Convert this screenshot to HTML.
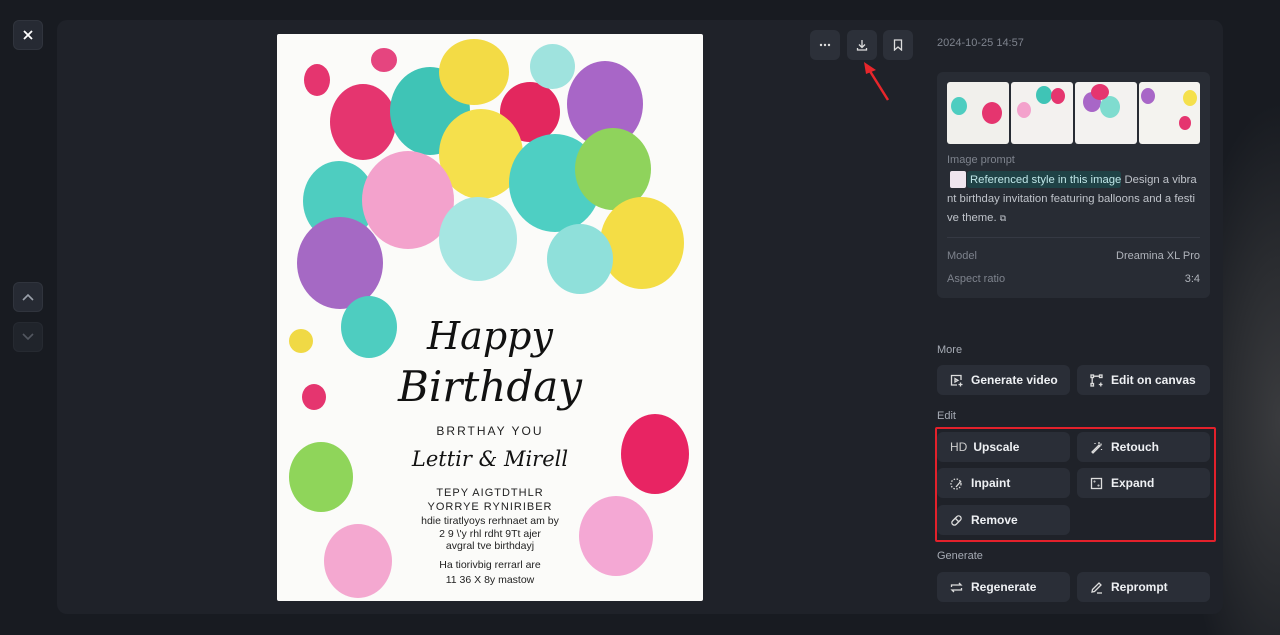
<!DOCTYPE html>
<html style="overflow:hidden"><head><meta charset="utf-8"><style>
*{box-sizing:border-box;margin:0;padding:0}
html,body{width:1280px;height:635px;overflow:hidden}
body{background:#181b21;font-family:"Liberation Sans",sans-serif;position:relative}
.abs{position:absolute}
.sq{position:absolute;width:30px;height:30px;border-radius:6px;background:#262a33;border:1px solid #30343d;display:flex;align-items:center;justify-content:center}
.panel{left:57px;top:20px;width:1166px;height:594px;background:#1f2229;border-radius:10px}
.card{left:277px;top:34px;width:426px;height:567px;background:#fbfbf9;overflow:hidden;border-radius:2px}
.b{position:absolute;border-radius:50%}
.tb{position:absolute;width:30px;height:30px;border-radius:6px;background:#2c3039;display:flex;align-items:center;justify-content:center}
.btn{position:absolute;width:133px;height:30px;border-radius:6px;background:#2a2e37;color:#eef0f3;font-size:12px;font-weight:bold;display:flex;align-items:center;padding-left:13px}
.btn svg{margin-right:8px}
.lbl{position:absolute;color:#a6abb4;font-size:11px}
.g{color:#7e838d;font-size:11px}
</style></head><body>
<div class="abs" style="left:1180px;top:100px;width:100px;height:535px;background:radial-gradient(ellipse at 100% 60%,#3a3b3e 0%,#2a2c30 35%,rgba(24,27,33,0) 70%)"></div>
<div class="sq" style="left:13px;top:20px"><svg width="12" height="12" viewBox="0 0 12 12"><path d="M2 2L10 10M10 2L2 10" stroke="#fff" stroke-width="1.8"/></svg></div>
<div class="sq" style="left:13px;top:282px"><svg width="12" height="8" viewBox="0 0 12 8"><path d="M1 7L6 2L11 7" stroke="#9aa0aa" stroke-width="1.6" fill="none"/></svg></div>
<div class="sq" style="left:13px;top:322px;opacity:.6"><svg width="12" height="8" viewBox="0 0 12 8"><path d="M1 1L6 6L11 1" stroke="#7a808a" stroke-width="1.6" fill="none"/></svg></div>
<div class="abs panel"></div>

<div class="abs card">
<div class="b" style="left:26px;top:127px;width:72px;height:80px;background:#4ecdc0"></div>
<div class="b" style="left:53px;top:50px;width:66px;height:76px;background:#e5356f"></div>
<div class="b" style="left:113px;top:33px;width:80px;height:88px;background:#3fc4b6"></div>
<div class="b" style="left:162px;top:5px;width:70px;height:66px;background:#f3db45"></div>
<div class="b" style="left:223px;top:48px;width:60px;height:60px;background:#e3275e"></div>
<div class="b" style="left:253px;top:10px;width:45px;height:45px;background:#9fe3de"></div>
<div class="b" style="left:290px;top:27px;width:76px;height:86px;background:#a866c7"></div>
<div class="b" style="left:162px;top:75px;width:84px;height:90px;background:#f5e04c"></div>
<div class="b" style="left:85px;top:117px;width:92px;height:98px;background:#f3a2cc"></div>
<div class="b" style="left:232px;top:100px;width:92px;height:98px;background:#4ecfc3"></div>
<div class="b" style="left:298px;top:94px;width:76px;height:82px;background:#8fd35c"></div>
<div class="b" style="left:162px;top:163px;width:78px;height:84px;background:#a6e6e2"></div>
<div class="b" style="left:323px;top:163px;width:84px;height:92px;background:#f4dd45"></div>
<div class="b" style="left:20px;top:183px;width:86px;height:92px;background:#a569c4"></div>
<div class="b" style="left:270px;top:190px;width:66px;height:70px;background:#8fe0da"></div>
<div class="b" style="left:64px;top:262px;width:56px;height:62px;background:#4ecdc0"></div>
<div class="b" style="left:27px;top:30px;width:26px;height:32px;background:#e5356f"></div>
<div class="b" style="left:94px;top:14px;width:26px;height:24px;background:#e5457f"></div>
<div class="b" style="left:344px;top:380px;width:68px;height:80px;background:#e82463"></div>
<div class="b" style="left:12px;top:408px;width:64px;height:70px;background:#8fd55a"></div>
<div class="b" style="left:47px;top:490px;width:68px;height:74px;background:#f4a8d0"></div>
<div class="b" style="left:302px;top:462px;width:74px;height:80px;background:#f4a8d4"></div>
<div class="b" style="left:25px;top:350px;width:24px;height:26px;background:#e5356f"></div>
<div class="b" style="left:12px;top:295px;width:24px;height:24px;background:#f0d945"></div>
<div class="abs" style="left:0;top:280px;width:426px;text-align:center;font-family:'DejaVu Serif',serif;font-style:italic;color:#111;font-size:38px">Happy</div>
<div class="abs" style="left:0;top:328px;width:426px;text-align:center;font-family:'DejaVu Serif',serif;font-style:italic;color:#111;font-size:42px">Birthday</div>
<div class="abs" style="left:0;top:390px;width:426px;text-align:center;color:#222;font-size:12px;letter-spacing:2px">BRRTHAY YOU</div>
<div class="abs" style="left:0;top:413px;width:426px;text-align:center;font-family:'DejaVu Serif',serif;font-style:italic;color:#111;font-size:21px">Lettir &amp; Mirell</div>
<div class="abs" style="left:0;top:452px;width:426px;text-align:center;color:#222;font-size:11px;line-height:14px;letter-spacing:1px">TEPY AIGTDTHLR<br>YORRYE RYNIRIBER</div>
<div class="abs" style="left:0;top:481px;width:426px;text-align:center;color:#222;font-size:10.5px;line-height:12.5px">hdie tiratlyoys rerhnaet am by<br>2 9 \'y rhl rdht 9Tt ajer<br>avgral tve birthdayj</div>
<div class="abs" style="left:0;top:524px;width:426px;text-align:center;color:#222;font-size:10.5px;line-height:15px">Ha tiorivbig rerrarl are<br>11 36 X 8y mastow</div>
</div>

<div class="tb" style="left:810px;top:30px"><svg width="12" height="4"><circle cx="2" cy="2" r="1.2" fill="#ddd"/><circle cx="6" cy="2" r="1.2" fill="#ddd"/><circle cx="10" cy="2" r="1.2" fill="#ddd"/></svg></div>
<div class="tb" style="left:847px;top:30px"><svg width="12" height="12" viewBox="0 0 12 12"><path d="M6 1V8M3 5.5L6 8.5L9 5.5M1.5 9V11H10.5V9" stroke="#ddd" stroke-width="1.3" fill="none"/></svg></div>
<div class="tb" style="left:883px;top:30px"><svg width="10" height="12" viewBox="0 0 10 12"><path d="M1.5 1H8.5V11L5 8L1.5 11Z" stroke="#ddd" stroke-width="1.3" fill="none"/></svg></div>
<svg class="abs" style="left:860px;top:60px" width="32" height="44"><path d="M28 40L8 8" stroke="#e8262b" stroke-width="2.5"/><path d="M4 2L16 10L6 14Z" fill="#e8262b"/></svg>

<div class="abs g" style="left:937px;top:37px">2024-10-25 14:57</div>
<div class="abs" style="left:937px;top:72px;width:273px;height:226px;background:#282c34;border-radius:6px"></div>
<div class="abs" style="left:947px;top:82px;width:62px;height:62px;background:#f1f0ec;border-radius:3px;overflow:hidden"><div class="b" style="left:35px;top:20px;width:20px;height:22px;background:#e5356f"></div><div class="b" style="left:4px;top:15px;width:16px;height:18px;background:#4ecdc0"></div></div>
<div class="abs" style="left:1011px;top:82px;width:62px;height:62px;background:#f3f1ef;border-radius:3px;overflow:hidden"><div class="b" style="left:25px;top:4px;width:16px;height:18px;background:#3fc4b6"></div><div class="b" style="left:40px;top:6px;width:14px;height:16px;background:#e5356f"></div><div class="b" style="left:6px;top:20px;width:14px;height:16px;background:#f3a2cc"></div></div>
<div class="abs" style="left:1075px;top:82px;width:62px;height:62px;background:#f3f2f0;border-radius:3px;overflow:hidden"><div class="b" style="left:8px;top:10px;width:18px;height:20px;background:#a866c7"></div><div class="b" style="left:25px;top:14px;width:20px;height:22px;background:#7fdccf"></div><div class="b" style="left:16px;top:2px;width:18px;height:16px;background:#e5356f"></div></div>
<div class="abs" style="left:1139px;top:82px;width:61px;height:62px;background:#f4f3ef;border-radius:3px;overflow:hidden"><div class="b" style="left:2px;top:6px;width:14px;height:16px;background:#a866c7"></div><div class="b" style="left:44px;top:8px;width:14px;height:16px;background:#f5e04c"></div><div class="b" style="left:40px;top:34px;width:12px;height:14px;background:#e5356f"></div></div>
<div class="abs g" style="left:947px;top:154px">Image prompt</div>
<div class="abs" style="left:950px;top:171px;width:16px;height:17px;background:#efe5ee;border-radius:2px"></div>
<div class="abs" style="left:967px;top:171px;width:154px;height:17px;background:#1f4246;border-radius:3px"></div>
<div class="abs" style="left:947px;top:171px;width:253px;font-size:11.3px;color:#bfc3ca;line-height:19px;word-break:break-all"><span style="padding-left:23px;color:#bfe6e8">Referenced style in this image</span>&nbsp;Design a vibrant birthday invitation featuring balloons and a festive theme. <span style="font-size:9px">⧉</span></div>
<div class="abs" style="left:947px;top:237px;width:253px;height:1px;background:#353943"></div>
<div class="abs g" style="left:947px;top:250px">Model</div>
<div class="abs" style="left:1100px;top:250px;width:100px;text-align:right;font-size:11px;color:#b0b4bb">Dreamina XL Pro</div>
<div class="abs g" style="left:947px;top:273px">Aspect ratio</div>
<div class="abs" style="left:1150px;top:273px;width:50px;text-align:right;font-size:11px;color:#b0b4bb">3:4</div>

<div class="lbl" style="left:937px;top:344px">More</div>
<div class="btn" style="left:937px;top:365px"><svg width="13" height="13" viewBox="0 0 13 13" fill="none" stroke="#ddd" stroke-width="1.3"><path d="M7 11H1.5V1.5H11V6"/><path d="M5 4.5L8 6.3L5 8Z"/><path d="M10.5 8.5V12.5M8.5 10.5H12.5"/></svg>Generate video</div>
<div class="btn" style="left:1077px;top:365px"><svg width="13" height="13" viewBox="0 0 13 13" fill="none" stroke="#ddd" stroke-width="1.3"><rect x="1" y="1" width="2.5" height="2.5"/><rect x="9.5" y="1" width="2.5" height="2.5"/><rect x="1" y="9.5" width="2.5" height="2.5"/><path d="M3.5 2.2H9.5M2.2 3.5V9.5M10.8 8.5V12.5M8.8 10.5H12.5"/></svg>Edit on canvas</div>
<div class="lbl" style="left:937px;top:410px">Edit</div>
<div class="abs" style="left:935px;top:427px;width:281px;height:115px;border:2px solid #e3212b;border-radius:2px"></div>
<div class="btn" style="left:937px;top:432px"><span style="font-weight:normal;color:#ccc;margin-right:6px">HD</span>Upscale</div>
<div class="btn" style="left:1077px;top:432px"><svg width="13" height="13" viewBox="0 0 13 13" fill="none" stroke="#ddd" stroke-width="1.3"><path d="M2 11L9 4L10 5L3 12Z"/><path d="M9 1V3M11 2.5V4.5M5 2V3M11.5 8V9"/></svg>Retouch</div>
<div class="btn" style="left:937px;top:468px"><svg width="13" height="13" viewBox="0 0 13 13" fill="none" stroke="#ddd" stroke-width="1.3"><circle cx="6" cy="7" r="5" stroke-dasharray="1.5 1.5"/><path d="M6 10L11 4"/></svg>Inpaint</div>
<div class="btn" style="left:1077px;top:468px"><svg width="13" height="13" viewBox="0 0 13 13" fill="none" stroke="#ddd" stroke-width="1.3"><rect x="1.5" y="1.5" width="10" height="10"/><circle cx="4.5" cy="4.5" r=".4"/><circle cx="8.5" cy="8.5" r=".4"/></svg>Expand</div>
<div class="btn" style="left:937px;top:505px"><svg width="13" height="13" viewBox="0 0 13 13" fill="none" stroke="#ddd" stroke-width="1.3"><rect x="1" y="4" width="11" height="5" rx="2.5" transform="rotate(-45 6.5 6.5)"/><path d="M5 4L9 8"/></svg>Remove</div>
<div class="lbl" style="left:937px;top:550px">Generate</div>
<div class="btn" style="left:937px;top:572px"><svg width="13" height="13" viewBox="0 0 13 13" fill="none" stroke="#ddd" stroke-width="1.3"><path d="M1.5 6V4H11L9 2M11.5 7V9H2L4 11"/></svg>Regenerate</div>
<div class="btn" style="left:1077px;top:572px"><svg width="13" height="13" viewBox="0 0 13 13" fill="none" stroke="#ddd" stroke-width="1.3"><path d="M2 11L2.5 8.5L9 2L11 4L4.5 10.5Z"/><path d="M7 12H12"/></svg>Reprompt</div>
</body></html>
